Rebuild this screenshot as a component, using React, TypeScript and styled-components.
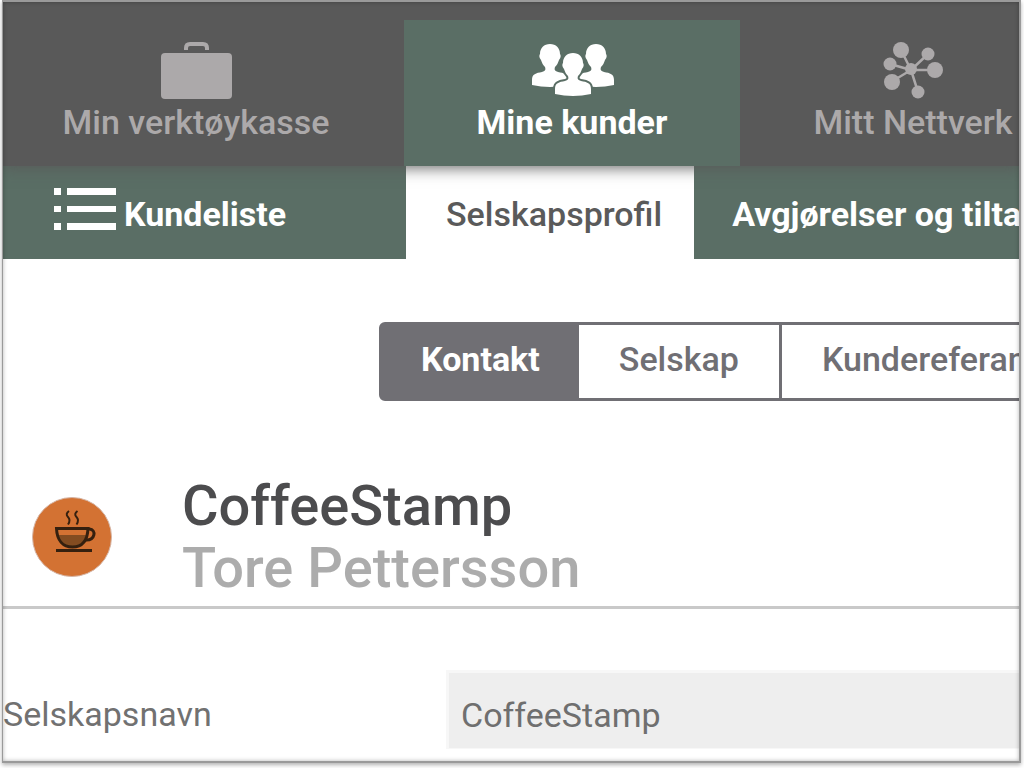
import React from "react";
import styled, { createGlobalStyle } from "styled-components";

const GlobalStyle = createGlobalStyle`
  *, *::before, *::after { box-sizing: border-box; }
  body {
    margin: 0;
    background: #fff;
    overflow: hidden;
    font-family: Roboto, "Liberation Sans", sans-serif;
  }
`;

const Frame = styled.div`
  position: relative;
  min-height: calc(100vh - 5px);
  margin: 0 3px 5px 2px;
  overflow: hidden;
  background: #fff;
  box-shadow: 0 2px 4px rgba(0, 0, 0, 0.3);

  &::after {
    content: "";
    position: absolute;
    inset: 0;
    border: 2px solid #9a9a9a;
    border-left-width: 1px;
    box-shadow: inset 0 0 4px rgba(0, 0, 0, 0.3);
    pointer-events: none;
  }
`;

const MainNav = styled.nav`
  position: relative;
  display: grid;
  grid-template-columns: 402px 336px minmax(346px, 1fr);
  height: 166px;
  padding-top: 20px;
  background: #595959;
  box-shadow: 0 2px 14px rgba(89, 89, 89, 0.9);
`;

const MainTab = styled.a<{ $active?: boolean; $inset?: number }>`
  display: flex;
  flex-direction: column;
  align-items: center;
  gap: 2px;
  padding: 20px ${(p) => p.$inset ?? 0}px 0 0;
  color: ${(p) => (p.$active ? "#fff" : "#aca9aa")};
  background: ${(p) => (p.$active ? "#5a6e65" : "transparent")};
  font-size: 34px;
  font-weight: ${(p) => (p.$active ? 700 : 500)};
  line-height: 40px;
  white-space: nowrap;
  text-decoration: none;

  svg { height: 60px; }
`;

const SubNav = styled.nav`
  display: flex;
  height: 93px;
  background: #5a6e65;
`;

const SubTab = styled.a<{ $active?: boolean; $wide?: boolean }>`
  display: flex;
  flex: none;
  align-items: center;
  gap: 8px;
  width: ${(p) => (p.$wide ? "404px" : "auto")};
  padding: 2px ${(p) => (p.$active ? 32 : 38)}px 0 ${(p) => (p.$wide ? 52 : p.$active ? 40 : 38)}px;
  background: ${(p) => (p.$active ? "#fff" : "transparent")};
  color: ${(p) => (p.$active ? "#5a5a5a" : "#fff")};
  font-size: 34px;
  font-weight: ${(p) => (p.$active ? 500 : 700)};
  line-height: 40px;
  white-space: nowrap;
  text-decoration: none;

  svg { margin-bottom: 10px; }
`;

const Segments = styled.div`
  display: flex;
  width: max-content;
  height: 79px;
  margin: 63px 0 0 377px;
  border: 3px solid #706f74;
  border-radius: 6px;
`;

const Segment = styled.button<{ $active?: boolean }>`
  padding: 0 ${(p) => (p.$active ? 39 : 40)}px 6px;
  border: 0;
  border-right: ${(p) => (p.$active ? "0" : "3px solid #706f74")};
  background: ${(p) => (p.$active ? "#706f74" : "#fff")};
  color: ${(p) => (p.$active ? "#fff" : "#706f74")};
  font-family: inherit;
  font-size: 34px;
  font-weight: ${(p) => (p.$active ? 700 : 500)};
  line-height: 40px;

  &:last-child { border-right: 0; }
`;

const Profile = styled.header`
  display: flex;
  align-items: center;
  gap: 70px;
  height: 208px;
  padding: 66px 0 0 30px;
  border-bottom: 3px solid #c9c9c9;
`;

const Name = styled.h1`
  margin: 0;
  color: #4c4c4e;
  font-size: 56px;
  font-weight: 500;
  line-height: 62px;
`;

const Person = styled.p`
  margin: 0;
  color: #acacac;
  font-size: 56px;
  font-weight: 500;
  line-height: 62px;
`;

const Field = styled.div`
  display: flex;
  align-items: center;
  margin: 61px 0 13px;
`;

const Label = styled.label`
  flex: 0 0 444px;
  padding: 8px 0 0 1px;
  color: #717171;
  font-size: 34px;
  line-height: 40px;
`;

const TextInput = styled.input`
  flex: 1;
  min-width: 0;
  height: 79px;
  padding: 8px 12px 0;
  border: solid #f7f7f7;
  border-width: 3px 0 1px 3px;
  background: #eee;
  color: #6f6f6f;
  font-family: inherit;
  font-size: 34px;
`;

const Briefcase = () => (
  <svg width="72" height="60" viewBox="0 0 72 60" fill="currentColor" aria-hidden="true">
    <rect x="1" y="13" width="71" height="46" rx="4" />
    <path d="M26 10V8q0-4 4-4h13q4 0 4 4v2" fill="none" stroke="currentColor" strokeWidth="4" />
  </svg>
);

const People = () => (
  <svg width="84" height="60" viewBox="0 0 84 60" fill="currentColor" aria-hidden="true">
    <defs>
      <path
        id="bust"
        d="M20 0C26 0 30 4 30 10C31 11 31 14 29 16C28 19 27 21 25 23C24 26 25 27 28 28C34 29 38 30 38 36V41Q20 45 2 41V36C2 30 6 29 12 28C15 27 16 26 15 23C13 21 12 19 11 16C9 14 9 11 10 10C10 4 14 0 20 0Z"
      />
    </defs>
    <use href="#bust" x="0" y="4" />
    <use href="#bust" x="46" y="4" />
    <use href="#bust" x="23" y="13" stroke="#5a6e65" strokeWidth="4" />
    <use href="#bust" x="23" y="13" />
  </svg>
);

const Network = () => (
  <svg width="60" height="60" viewBox="0 0 60 60" fill="currentColor" aria-hidden="true">
    <g stroke="currentColor" strokeWidth="2.500">
      <path d="M28 30 18 10M28 30 45 14M28 30H52M28 30 35 52M28 30 8 42M28 30 7 24" />
    </g>
    <circle cx="28" cy="29" r="6" />
    <circle cx="18" cy="10" r="8" />
    <circle cx="45" cy="14" r="6.500" />
    <circle cx="52" cy="30" r="8" />
    <circle cx="35" cy="52" r="6.500" />
    <circle cx="9" cy="42" r="8" />
    <circle cx="7" cy="24" r="6.500" />
  </svg>
);

const ListIcon = () => (
  <svg width="62" height="42" viewBox="0 0 62 42" fill="currentColor" aria-hidden="true">
    <path d="M0 0h7v7H0zM13 0h49v7H13zM0 18h7v6H0zM13 18h49v6H13zM0 35h7v7H0zM13 35h49v7H13z" />
  </svg>
);

const CoffeeLogo = () => (
  <svg width="80" height="80" viewBox="0 0 80 80" fill="none" stroke="#35200f" aria-hidden="true">
    <circle cx="40" cy="40" r="39.5" fill="#d37233" stroke="#d6b5a5" strokeWidth="1" />
    <path d="M26 38H54C53 46 47 50 40 50S27 46 26 38Z" fill="#834c21" stroke="none" />
    <path d="M24.500 31.500H56C55.500 43.500 50 50 40.500 50S25 43.500 24.500 31.500Z" strokeWidth="3" />
    <path d="M55.500 32H57.500C64.500 32.500 63.500 43.500 53.500 43" strokeWidth="3" />
    <path d="M24 53.500H60" strokeWidth="3" />
    <path d="M37 14Q33 17 36 20T36 27.500M45.500 14Q41.500 17 44.500 20T44.500 27.500" strokeWidth="2" />
  </svg>
);

export default function App() {
  return (
    <Frame>
      <GlobalStyle />
      <MainNav>
        <MainTab href="#verktoy" $inset={14}>
          <Briefcase />
          Min verktøykasse
        </MainTab>
        <MainTab href="#kunder" $active>
          <People />
          Mine kunder
        </MainTab>
        <MainTab href="#nettverk">
          <Network />
          Mitt Nettverk
        </MainTab>
      </MainNav>
      <SubNav>
        <SubTab href="#liste" $wide>
          <ListIcon />
          Kundeliste
        </SubTab>
        <SubTab href="#profil" $active>Selskapsprofil</SubTab>
        <SubTab href="#tiltak">Avgjørelser og tiltak</SubTab>
      </SubNav>
      <main>
        <Segments>
          <Segment type="button" $active>Kontakt</Segment>
          <Segment type="button">Selskap</Segment>
          <Segment type="button">Kundereferanser</Segment>
        </Segments>
        <Profile>
          <CoffeeLogo />
          <div>
            <Name>CoffeeStamp</Name>
            <Person>Tore Pettersson</Person>
          </div>
        </Profile>
        <Field>
          <Label htmlFor="company">Selskapsnavn</Label>
          <TextInput id="company" defaultValue="CoffeeStamp" />
        </Field>
      </main>
    </Frame>
  );
}
